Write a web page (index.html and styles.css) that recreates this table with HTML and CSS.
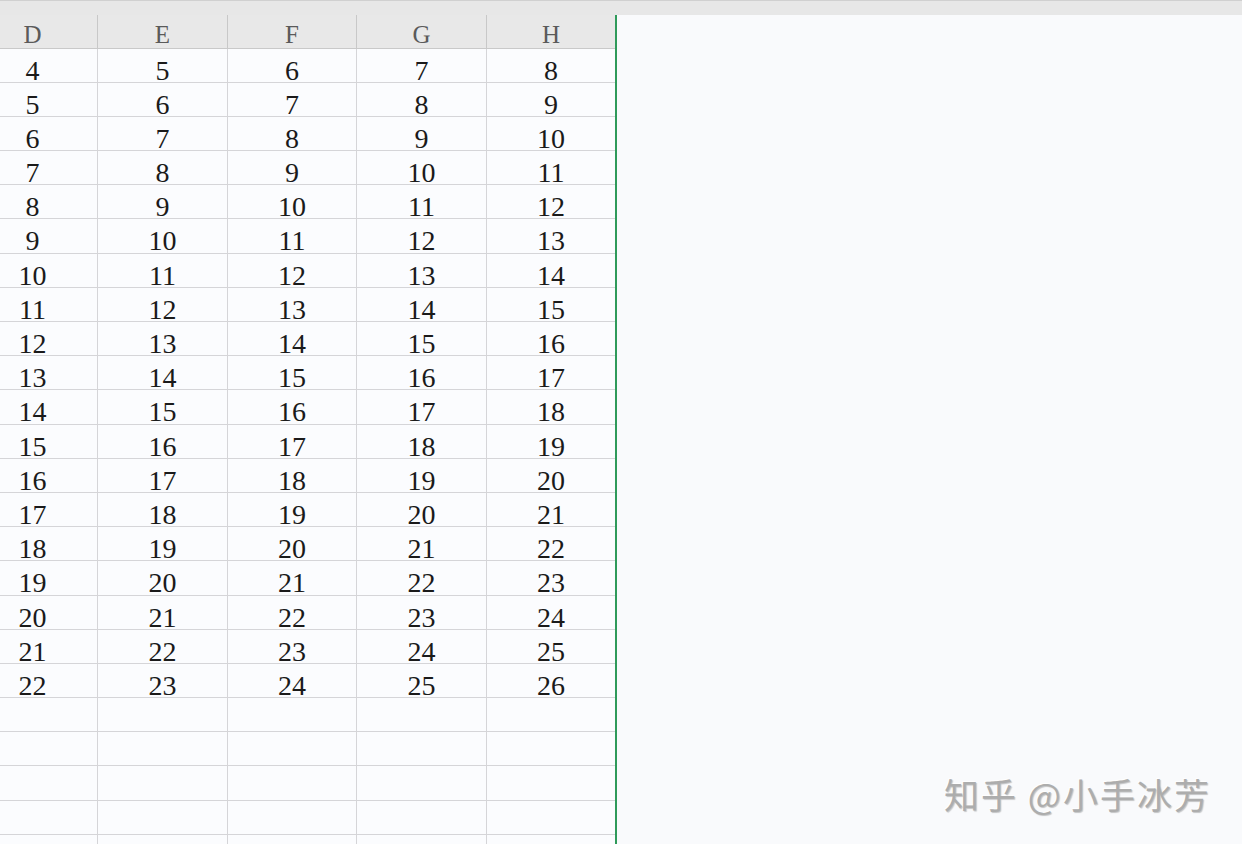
FILE: index.html
```html
<!DOCTYPE html>
<html lang="zh-CN">
<head>
<meta charset="utf-8">
<title>Sheet</title>
<link rel="stylesheet" href="styles.css">
</head>
<body>
<div class="topbar"></div>
<div class="main">
  <div class="sheet">
    <div class="row head"><div class="c">D</div><div class="c">E</div><div class="c">F</div><div class="c">G</div><div class="c">H</div></div>
    <div class="row"><div class="c">4</div><div class="c">5</div><div class="c">6</div><div class="c">7</div><div class="c">8</div></div>
    <div class="row"><div class="c">5</div><div class="c">6</div><div class="c">7</div><div class="c">8</div><div class="c">9</div></div>
    <div class="row"><div class="c">6</div><div class="c">7</div><div class="c">8</div><div class="c">9</div><div class="c">10</div></div>
    <div class="row"><div class="c">7</div><div class="c">8</div><div class="c">9</div><div class="c">10</div><div class="c">11</div></div>
    <div class="row"><div class="c">8</div><div class="c">9</div><div class="c">10</div><div class="c">11</div><div class="c">12</div></div>
    <div class="row"><div class="c">9</div><div class="c">10</div><div class="c">11</div><div class="c">12</div><div class="c">13</div></div>
    <div class="row"><div class="c">10</div><div class="c">11</div><div class="c">12</div><div class="c">13</div><div class="c">14</div></div>
    <div class="row"><div class="c">11</div><div class="c">12</div><div class="c">13</div><div class="c">14</div><div class="c">15</div></div>
    <div class="row"><div class="c">12</div><div class="c">13</div><div class="c">14</div><div class="c">15</div><div class="c">16</div></div>
    <div class="row"><div class="c">13</div><div class="c">14</div><div class="c">15</div><div class="c">16</div><div class="c">17</div></div>
    <div class="row"><div class="c">14</div><div class="c">15</div><div class="c">16</div><div class="c">17</div><div class="c">18</div></div>
    <div class="row"><div class="c">15</div><div class="c">16</div><div class="c">17</div><div class="c">18</div><div class="c">19</div></div>
    <div class="row"><div class="c">16</div><div class="c">17</div><div class="c">18</div><div class="c">19</div><div class="c">20</div></div>
    <div class="row"><div class="c">17</div><div class="c">18</div><div class="c">19</div><div class="c">20</div><div class="c">21</div></div>
    <div class="row"><div class="c">18</div><div class="c">19</div><div class="c">20</div><div class="c">21</div><div class="c">22</div></div>
    <div class="row"><div class="c">19</div><div class="c">20</div><div class="c">21</div><div class="c">22</div><div class="c">23</div></div>
    <div class="row"><div class="c">20</div><div class="c">21</div><div class="c">22</div><div class="c">23</div><div class="c">24</div></div>
    <div class="row"><div class="c">21</div><div class="c">22</div><div class="c">23</div><div class="c">24</div><div class="c">25</div></div>
    <div class="row"><div class="c">22</div><div class="c">23</div><div class="c">24</div><div class="c">25</div><div class="c">26</div></div>
    <div class="row"><div class="c"></div><div class="c"></div><div class="c"></div><div class="c"></div><div class="c"></div></div>
    <div class="row"><div class="c"></div><div class="c"></div><div class="c"></div><div class="c"></div><div class="c"></div></div>
    <div class="row"><div class="c"></div><div class="c"></div><div class="c"></div><div class="c"></div><div class="c"></div></div>
    <div class="row"><div class="c"></div><div class="c"></div><div class="c"></div><div class="c"></div><div class="c"></div></div>
    <div class="row"><div class="c"></div><div class="c"></div><div class="c"></div><div class="c"></div><div class="c"></div></div>
  </div>
  <div class="panel"></div>
</div>
<div class="watermark">知乎 @小手冰芳</div>
</body>
</html>
```

FILE: styles.css
```css
html, body {
  margin: 0;
  padding: 0;
}
body {
  width: 1242px;
  height: 844px;
  overflow: hidden;
  position: relative;
  background: #f9fafc;
  font-family: "Liberation Serif", serif;
}
.topbar {
  height: 15px;
  box-sizing: border-box;
  background: #e7e7e7;
  border-top: 1px solid #d0d0d0;
}
.main {
  display: flex;
  height: 829px;
}
.sheet {
  width: 615px;
  border-right: 2px solid #2f9a5a;
  background: #fbfcfe;
  overflow: hidden;
  flex: none;
}
.panel {
  flex: 1;
  background: #f9fafc;
}
.row {
  display: grid;
  grid-template-columns: 98px 130px 129px 130px 128px;
  height: 34.2px;
  box-sizing: border-box;
  border-bottom: 1px solid #d5d5d8;
}
.c {
  box-sizing: border-box;
  border-right: 1px solid #d5d5d8;
  text-align: center;
  font-size: 28px;
  line-height: 28px;
  padding-top: 8px;
  color: #1a1a1a;
  min-height: 0;
}
.c:first-child {
  padding-right: 32px;
}
.c:last-child {
  border-right: none;
}
.head {
  height: 33.5px;
  background: #e8e8e8;
  border-bottom: 1px solid #c9c9c9;
}
.head .c {
  font-size: 25px;
  line-height: 26px;
  padding-top: 7px;
  color: #5a5a5a;
  border-right-color: #c8c8c8;
}
.watermark {
  position: absolute;
  left: 944px;
  top: 772px;
  font-family: "Noto Sans CJK SC", sans-serif;
  font-size: 35px;
  line-height: 44px;
  letter-spacing: 2px;
  color: #adadad;
  text-shadow: 1px 1px 1px rgba(0, 0, 0, 0.22), -1px -1px 0 rgba(255, 255, 255, 0.9);
  white-space: nowrap;
}
```
